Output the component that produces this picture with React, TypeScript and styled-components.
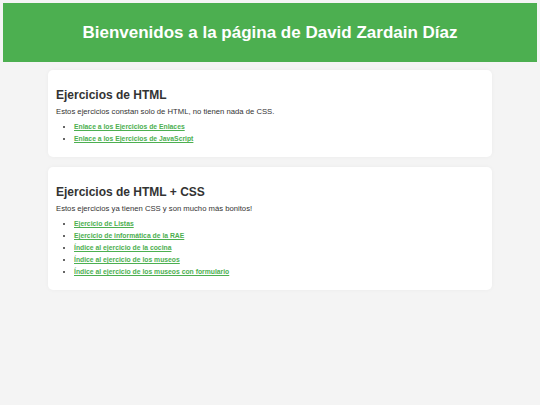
import React from 'react';
import styled, { createGlobalStyle } from 'styled-components';

// Page data
const SECTIONS = [
  {
    id: 'html',
    title: 'Ejercicios de HTML',
    description: 'Estos ejercicios constan solo de HTML, no tienen nada de CSS.',
    links: [
      'Enlace a los Ejercicios de Enlaces',
      'Enlace a los Ejercicios de JavaScript',
    ],
  },
  {
    id: 'html-css',
    title: 'Ejercicios de HTML + CSS',
    description: 'Estos ejercicios ya tienen CSS y son mucho más bonitos!',
    links: [
      'Ejercicio de Listas',
      'Ejercicio de informática de la RAE',
      'Índice al ejercicio de la cocina',
      'Índice al ejercicio de los museos',
      'Índice al ejercicio de los museos con formulario',
    ],
  },
];

const GlobalStyle = createGlobalStyle`
  html, body {
    background-color: #f4f4f4;
  }

  body {
    margin: 3px;
    font-family: "Liberation Sans", Arial, Helvetica, sans-serif;
    color: #333;
  }
`;

const Header = styled.header`
  display: flex;
  align-items: center;
  justify-content: center;
  height: 59px;
  background-color: #4caf50;
  color: #fff;
`;

const Title = styled.h1`
  margin: 0;
  font-size: 17px;
  font-weight: 700;
  line-height: 20px;
`;

const Main = styled.main`
  width: 444px;
  margin: 8px auto 0;
`;

const Card = styled.section`
  background-color: #fff;
  border-radius: 5px;
  padding: 8px;
  margin-bottom: 10px;
  box-shadow: 0 0 4px rgba(0, 0, 0, 0.04);
`;

const CardTitle = styled.h2`
  margin: 10px 0 5px;
  font-size: 12px;
  line-height: 14px;
  font-weight: 700;
  color: #333;
`;

const CardText = styled.p`
  margin: 0 0 4px;
  font-size: 7.7px;
  line-height: 10px;
  color: #333;
`;

const LinkList = styled.ul`
  margin: 0 0 4px;
  padding-left: 18px;
  font-size: 6.8px;
  line-height: 12px;
  color: #333;
`;

const LinkItem = styled.li`
  margin: 0;
`;

const ExerciseLink = styled.a`
  color: #4caf50;
  font-weight: 700;
  text-decoration: underline;
`;

const App: React.FC = () => {
  return (
    <>
      <GlobalStyle />
      <Header>
        <Title>Bienvenidos a la página de David Zardain Díaz</Title>
      </Header>
      <Main>
        {SECTIONS.map(section => (
          <Card key={section.id}>
            <CardTitle>{section.title}</CardTitle>
            <CardText>{section.description}</CardText>
            <LinkList>
              {section.links.map(link => (
                <LinkItem key={link}>
                  <ExerciseLink href="#">{link}</ExerciseLink>
                </LinkItem>
              ))}
            </LinkList>
          </Card>
        ))}
      </Main>
    </>
  );
};

export default App;
